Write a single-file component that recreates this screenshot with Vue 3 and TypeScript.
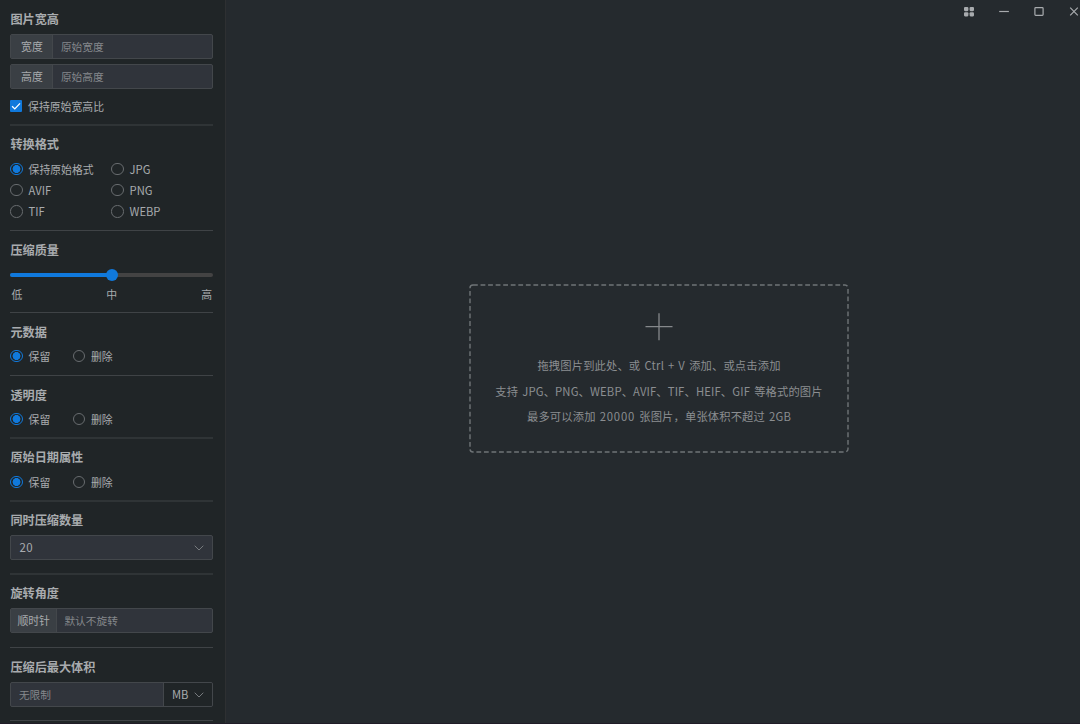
<script setup lang="ts">
import { ref } from 'vue'

const formats = ['保持原始格式', 'JPG', 'AVIF', 'PNG', 'TIF', 'WEBP']
const format = ref('保持原始格式')
const keepRatio = ref(true)
const quality = ref(50)

interface Choice { title: string; value: string; cls: string }
const choices = ref<Choice[]>([
  { title: '元数据', value: '保留', cls: 'meta' },
  { title: '透明度', value: '保留', cls: 'alpha soft' },
  { title: '原始日期属性', value: '保留', cls: 'date soft' },
])
</script>

<template>
  <div class="app">
    <aside class="sidebar">
      <section class="size soft">
        <h3>图片宽高</h3>
        <div class="field"><span class="addon">宽度</span><span class="hint">原始宽度</span></div>
        <div class="field second"><span class="addon">高度</span><span class="hint">原始高度</span></div>
        <label class="check" @click="keepRatio = !keepRatio">
          <span class="box" :class="{ on: keepRatio }">
            <svg v-if="keepRatio" viewBox="0 0 12 12"><path d="M2.1 6.2 4.8 8.9 10 3.4" /></svg>
          </span>
          <span>保持原始宽高比</span>
        </label>
      </section>

      <section class="format">
        <h3>转换格式</h3>
        <div class="grid">
          <label v-for="f in formats" :key="f" class="option" @click="format = f">
            <i class="radio" :class="{ on: format === f }"></i>
            <span :class="{ latin: f !== formats[0] }">{{ f }}</span>
          </label>
        </div>
      </section>

      <section class="quality">
        <h3>压缩质量</h3>
        <div class="slider">
          <div class="fill" :style="{ width: quality + '%' }"></div>
          <div class="knob" :style="{ left: quality + '%' }"></div>
        </div>
        <div class="marks"><span>低</span><span>中</span><span>高</span></div>
      </section>

      <section v-for="c in choices" :key="c.title" :class="c.cls">
        <h3>{{ c.title }}</h3>
        <div class="pair">
          <label v-for="v in ['保留', '删除']" :key="v" class="option" @click="c.value = v">
            <i class="radio" :class="{ on: c.value === v }"></i><span>{{ v }}</span>
          </label>
        </div>
      </section>

      <section class="parallel soft">
        <h3>同时压缩数量</h3>
        <div class="field select">
          <span class="number">20</span>
          <svg class="chevron" viewBox="0 0 10 6"><path d="M.7.7 5 5 9.3.7" /></svg>
        </div>
      </section>

      <section class="rotate">
        <h3>旋转角度</h3>
        <div class="field"><span class="addon wide">顺时针</span><span class="hint">默认不旋转</span></div>
      </section>

      <section class="limit">
        <h3>压缩后最大体积</h3>
        <div class="field">
          <span class="hint grow">无限制</span>
          <span class="unit">
            <span class="latin">MB</span>
            <svg class="chevron" viewBox="0 0 10 6"><path d="M.7.7 5 5 9.3.7" /></svg>
          </span>
        </div>
      </section>
    </aside>

    <main class="main">
      <nav class="controls">
        <svg viewBox="0 0 12 12"><g class="solid">
          <rect x="1" y="1" width="4.4" height="4.2" rx="1.1" /><rect x="6.6" y="1" width="4.4" height="4.2" rx="1.1" />
          <rect x="1" y="6.2" width="4.4" height="4.2" rx="1.1" /><rect x="6.6" y="6.2" width="4.4" height="4.2" rx="1.1" />
        </g></svg>
        <svg viewBox="0 0 12 12"><path d="M1.2 5.5h9.7" /></svg>
        <svg viewBox="0 0 12 12"><rect x="1.9" y="1.6" width="8.2" height="7.8" rx=".8" /></svg>
        <svg viewBox="0 0 12 12"><path d="M2.2 1.7 9.8 9.3M9.8 1.7 2.2 9.3" /></svg>
      </nav>
      <div class="drop">
        <svg class="outline" viewBox="0 0 380 169"><rect x="1" y="1" width="378" height="167" rx="3" /></svg>
        <svg class="plus" viewBox="0 0 28 28"><path d="M.5 13.7h27M14 .2v27" /></svg>
        <p>拖拽图片到此处、或 <span class="keys">Ctrl + V</span> 添加、或点击添加</p>
        <p>支持 JPG、PNG、WEBP、AVIF、TIF、HEIF、GIF 等格式的图片</p>
        <p>最多可以添加 <span class="digits">20000</span> 张图片，单张体积不超过 2GB</p>
      </div>
    </main>
  </div>
</template>

<style>
html, body { background: #252a2e; overflow: hidden; }
</style>

<style scoped>
* { box-sizing: border-box; }
.app {
  display: flex;
  width: 100vw;
  height: 100vh;
  overflow: hidden;
  font-family: "Noto Sans CJK SC", "Noto Sans", sans-serif;
  font-size: 10.85px;
  color: #a8abae;
  background: #252a2e;
  border-bottom: 1px solid #201c27;
}
.sidebar {
  width: 226px;
  flex: none;
  padding: 0 12px 0 10.4px;
  background: #202527;
  border-right: 1px solid #2e3032;
}
section { border-bottom: 1px solid #3f4346; padding-top: 11px; }
section.soft { border-bottom: 2px solid #2f3436; }
h3 { margin: 0; height: 16px; line-height: 16px; font-size: 12.15px; font-weight: 700; white-space: nowrap; }
.size { height: 126px; }
.format { height: 105px; padding-top: 10px; }
.quality { height: 82px; }
.meta { height: 63px; }
.alpha { height: 63px; }
.date { height: 63px; padding-top: 10px; }
.date .pair { margin-top: 7px; }
.parallel { height: 73px; padding-top: 10px; }
.rotate { height: 73px; padding-top: 10px; }
.limit { height: 73px; }

.field {
  display: flex;
  height: 25px;
  margin-top: 7px;
  border: 1px solid #43474b;
  border-radius: 2px;
  background: #30343b;
  line-height: 23px;
  overflow: hidden;
}
.field.second { margin-top: 5px; }
.addon { width: 42px; text-align: center; background: #3a3f44; border-right: 1px solid #43474b; }
.addon.wide { width: 45.5px; }
.hint { padding-left: 7.5px; color: #85888c; font-size: 10.7px; }
.grow { flex: 1; }
.check { display: flex; align-items: center; gap: 5.7px; height: 16px; margin-top: 9px; }
.box { width: 12px; height: 12px; border-radius: 1px; border: 1px solid #63686b; }
.box.on { background: #1079dc; border: 0; }
.box svg { display: block; width: 12px; height: 12px; }
path, rect { fill: none; stroke: #a8abae; stroke-width: 1.2; }
.box path { stroke: #fff; stroke-width: 1.3; }
.latin { font-size: 11.2px; }

.grid { display: grid; grid-template-columns: 101px 101px; grid-auto-rows: 21.2px; margin-top: 6.3px; }
.option { display: flex; align-items: center; gap: 5.7px; white-space: nowrap; }
.radio { width: 12.5px; height: 12.5px; border-radius: 50%; border: 1px solid #686c6f; flex: none; }
.radio.on { border-color: #1079dc; background: radial-gradient(circle, #1079dc 3.7px, transparent 4.2px); }
.pair { display: flex; gap: 22.5px; height: 20px; margin-top: 6px; }

.slider { position: relative; height: 4px; margin-top: 15px; border-radius: 2px; background: #434343; }
.fill { height: 4px; border-radius: 2px; background: #1079dc; }
.knob { position: absolute; top: -4px; width: 12px; height: 12px; margin-left: -6px; border-radius: 50%; background: #1079dc; }
.marks { display: flex; justify-content: space-between; margin-top: 9px; line-height: 16px; padding: 0 1px; }
.select { justify-content: space-between; padding: 0 8px; align-items: center; }
.number { font-size: 11.5px; letter-spacing: .4px; }
.chevron { width: 10px; height: 6px; }
.chevron path { stroke: #777b7e; stroke-width: 1; }
.unit {
  display: flex;
  align-items: center;
  justify-content: space-between;
  width: 49px;
  padding: 0 8px;
  border-left: 1px solid #43474b;
  background: #202527;
}

.main { flex: 1; min-width: 0; display: flex; flex-direction: column; align-items: center; }
.controls { align-self: flex-end; display: flex; gap: 23px; height: 24px; padding: 6px 0 0; }
.controls svg { width: 12px; height: 12px; }
.controls .solid rect { fill: #a8abae; stroke: none; }
.drop {
  position: relative;
  width: 380px;
  height: 169px;
  margin: 260px 0 0 12px;
  padding-top: 29px;
  display: flex;
  flex-direction: column;
  align-items: center;
}
.outline { position: absolute; inset: 0; width: 380px; height: 169px; }
.outline rect { stroke: #6f7477; stroke-width: 1.4; stroke-dasharray: 4.8 2.75; }
.plus { width: 28px; height: 28px; margin-bottom: 12px; }
.plus path { stroke: #85888b; stroke-width: 1.3; }
p {
  margin: 0;
  height: 25.5px;
  line-height: 25.5px;
  font-size: 11.3px;
  letter-spacing: .13px;
  word-spacing: 1.5px;
  color: #8b8e91;
  white-space: nowrap;
}
.digits { letter-spacing: .8px; }
.keys { letter-spacing: .25px; word-spacing: 1px; }
</style>
